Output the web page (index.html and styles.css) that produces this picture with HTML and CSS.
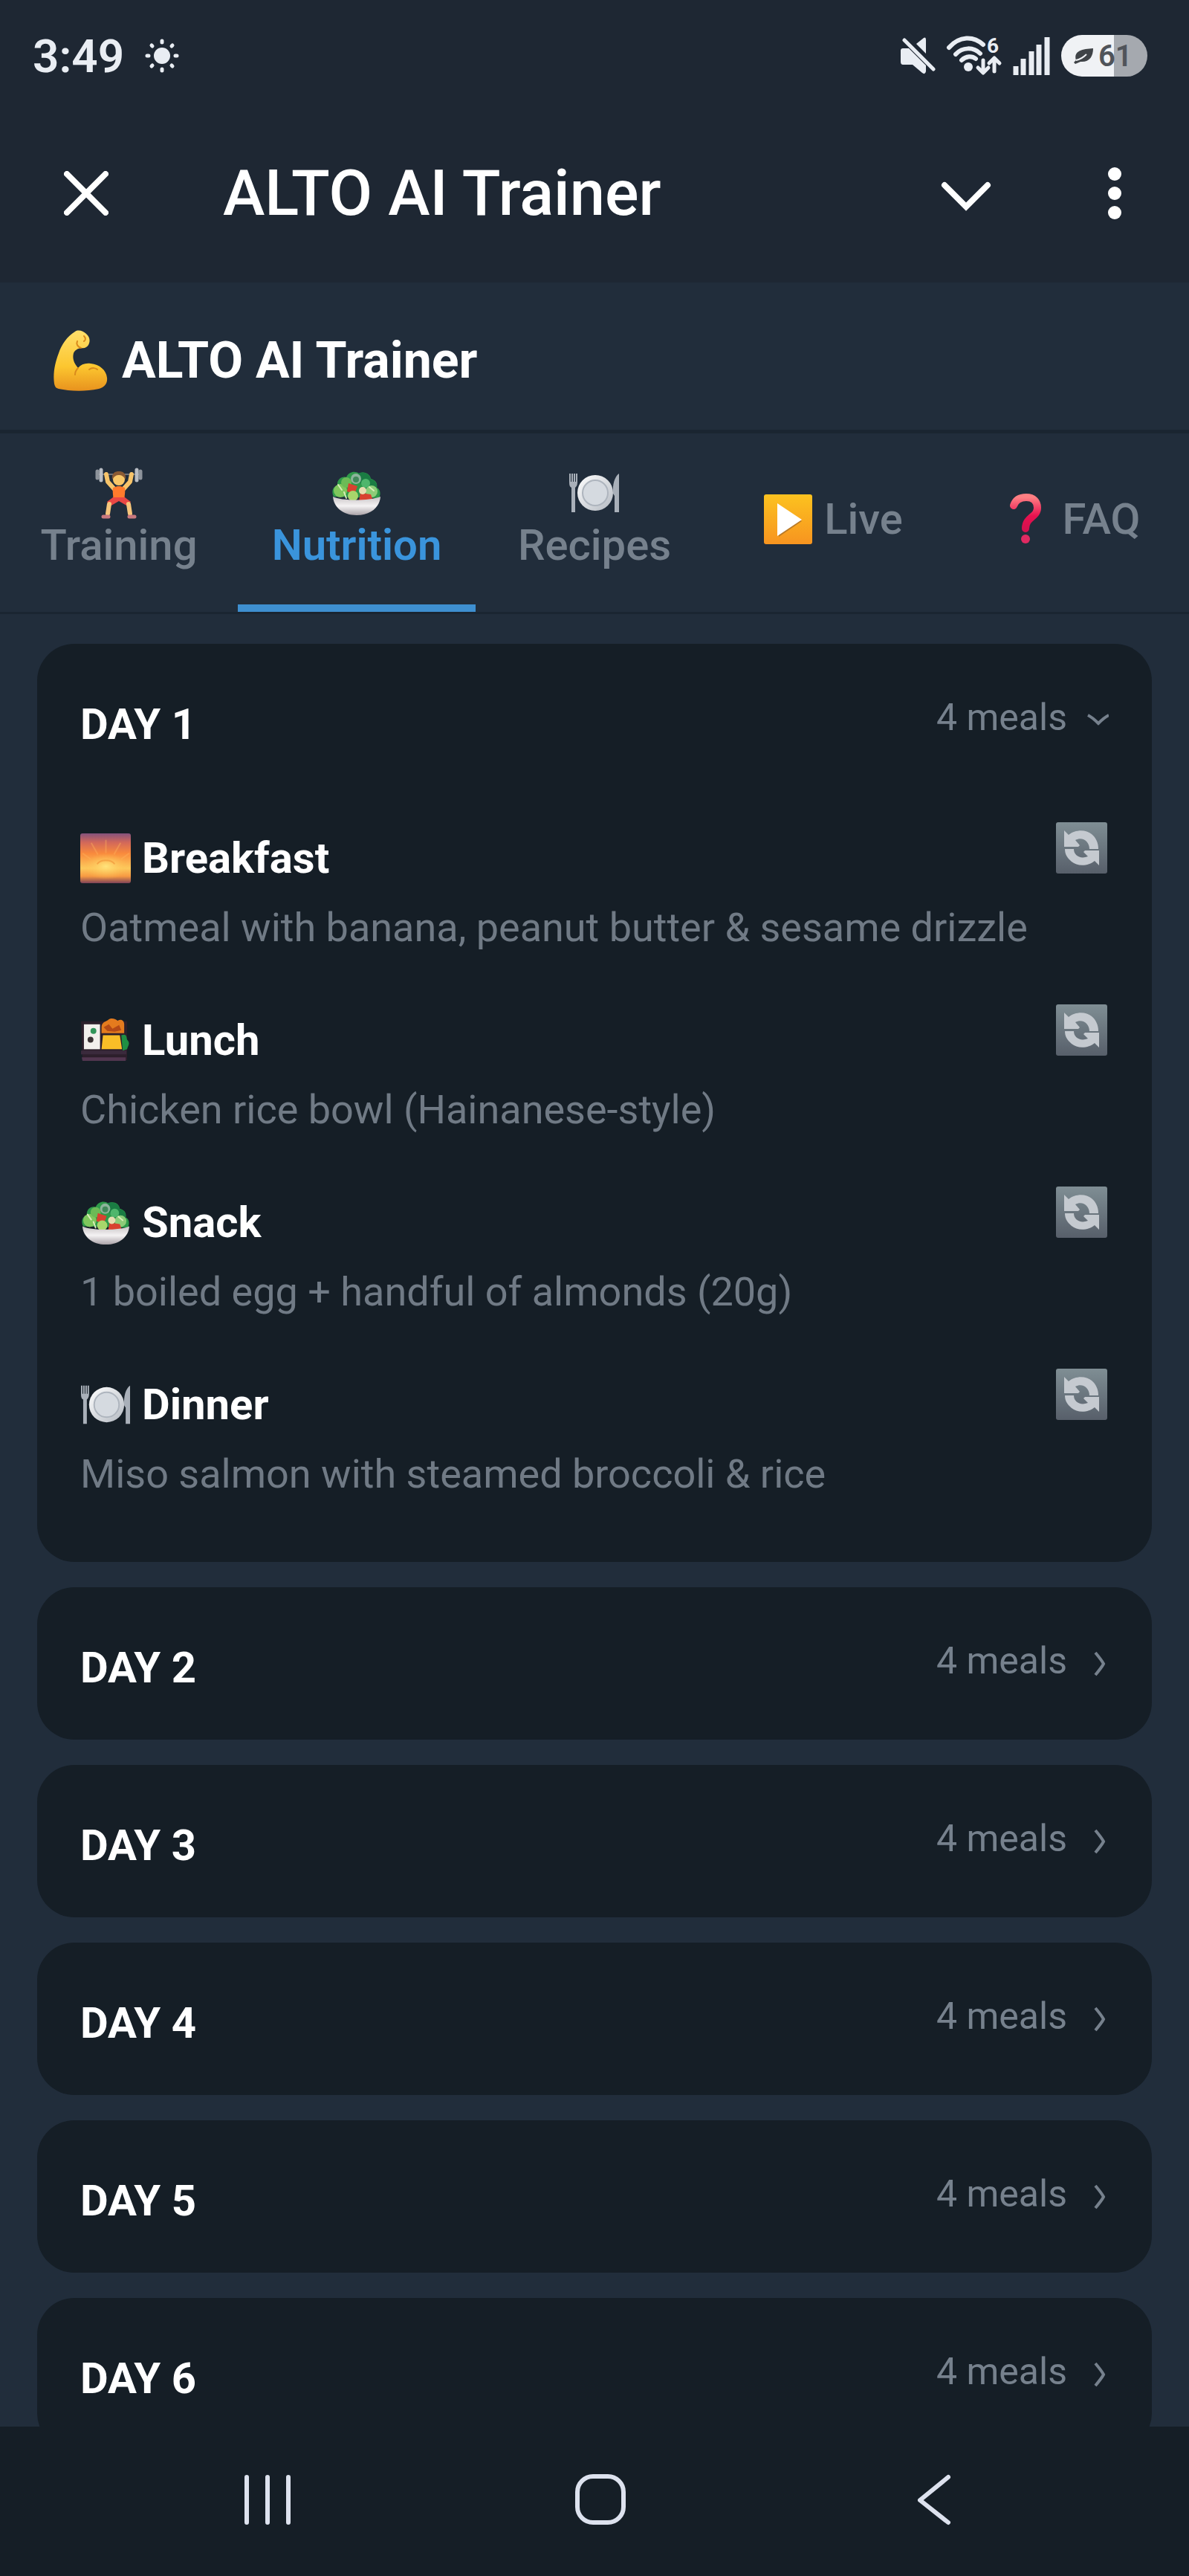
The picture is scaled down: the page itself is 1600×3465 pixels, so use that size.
FILE: index.html
```html
<!DOCTYPE html>
<html lang="en">

<head>
    <meta charset="UTF-8">
    <meta name="viewport" content="width=device-width, initial-scale=1.0">
    <title>ALTO AI Trainer</title>
    <link rel="stylesheet" href="styles.css">
</head>

<body>
    <!-- Shared icons -->
    <svg class="sprite" aria-hidden="true">
        <defs>
            <linearGradient id="g-arm" x1="0" y1="0" x2="0" y2="1">
                <stop offset="0" stop-color="#ffdf6b" />
                <stop offset="0.6" stop-color="#fcc62f" />
                <stop offset="1" stop-color="#e8921e" />
            </linearGradient>
            <linearGradient id="g-play" x1="0" y1="0" x2="0" y2="1">
                <stop offset="0" stop-color="#fcc21f" />
                <stop offset="1" stop-color="#f79420" />
            </linearGradient>
            <linearGradient id="g-faq" x1="0" y1="0" x2="0" y2="1">
                <stop offset="0" stop-color="#ff7f83" />
                <stop offset="0.6" stop-color="#e8114f" />
                <stop offset="1" stop-color="#d5104f" />
            </linearGradient>
            <linearGradient id="g-sky" x1="0" y1="0" x2="0" y2="1">
                <stop offset="0" stop-color="#84527c" />
                <stop offset="0.18" stop-color="#d2685a" />
                <stop offset="0.4" stop-color="#f98a3c" />
                <stop offset="0.7" stop-color="#fdc95c" />
                <stop offset="0.86" stop-color="#f79a42" />
                <stop offset="1" stop-color="#7e4258" />
            </linearGradient>
            <radialGradient id="g-sun" cx="0.5" cy="0.5" r="0.5">
                <stop offset="0" stop-color="#ffe47c" />
                <stop offset="1" stop-color="#ffc050" stop-opacity="0" />
            </radialGradient>
            <linearGradient id="g-bowl" x1="0" y1="0" x2="0" y2="1">
                <stop offset="0" stop-color="#c9c4c6" />
                <stop offset="0.5" stop-color="#f4f2f3" />
                <stop offset="1" stop-color="#aaa3a8" />
            </linearGradient>
            <linearGradient id="g-refresh" x1="0" y1="0" x2="0" y2="1">
                <stop offset="0" stop-color="#7f8e94" />
                <stop offset="1" stop-color="#575f6a" />
            </linearGradient>
            <linearGradient id="g-plate" x1="0" y1="0" x2="1" y2="1">
                <stop offset="0" stop-color="#ffffff" />
                <stop offset="1" stop-color="#b4bac2" />
            </linearGradient>
        </defs>

        <symbol id="arm" viewBox="0 0 82 82">
            <path fill="url(#g-arm)" d="M5 72C3 58 6 44 11 31C15 19 22 9 33 2C37-1 44 1 48 5C54 10 53 16 51 20C49 23 46 25 41 24C36 25 33 27 31 31C29 39 32 45 37 51C41 46 47 44 54 45C66 46 75 54 76 64C77 72 72 77 65 79C46 83 25 82 11 79C7 78 6 76 5 72Z" />
            <path fill="none" stroke="#d98a1c" stroke-width="2" stroke-linecap="round" d="M37 51C34 54 33 57 33 60M41 24C37 23 34 19 36 15M45 8C48 11 47 14 45 15M52 53C56 50 61 51 63 53" />
        </symbol>

        <symbol id="lifter" viewBox="0 0 70 70">
            <path stroke="#6f737b" stroke-width="2" d="M7 10H63" />
            <path stroke="#8d939b" stroke-width="5" stroke-linecap="round" d="M6 6V15M64 6V15" />
            <path stroke="#b9bdc4" stroke-width="5" stroke-linecap="round" d="M11 4V18M59 4V18" />
            <path fill="none" stroke="#f7c46a" stroke-width="6" stroke-linecap="round" stroke-linejoin="round" d="M18 10L20 20L29 30M52 10L50 20L41 30" />
            <circle cx="35" cy="17" r="8" fill="#f8c768" />
            <path fill="#8a5a33" d="M26 17C25 8 30 6 35 6S45 8 44 17C41 12 38 11 35 11S29 12 26 17Z" />
            <path fill="#ff7b2c" d="M27 28L33 26H37L43 28C44 35 42 39 43 43H27C28 39 26 35 27 28Z" />
            <path fill="#e94744" d="M27 41H43L51 47L47 53L35 46L23 53L19 47Z" />
            <path fill="none" stroke="#f7c67b" stroke-width="6" stroke-linecap="round" d="M22 50L20 63M48 50L50 63" />
            <path stroke="#c9787e" stroke-width="5" stroke-linecap="round" d="M14 67H21M49 67H56" />
        </symbol>

        <symbol id="salad" viewBox="0 0 70 70">
            <path fill="#2e9a49" d="M4 40C0 32 4 26 9 25C8 17 15 12 21 14C24 6 34 5 38 9C45 5 53 9 54 16C62 18 63 24 62 28C68 31 67 38 65 42Z" />
            <path fill="#1a7c43" d="M36 9C44 5 53 9 54 17C61 18 63 24 62 29L50 31L40 22Z" />
            <circle cx="13" cy="32" r="9" fill="#7fc75c" />
            <circle cx="21" cy="21" r="7" fill="#6bbb56" />
            <circle cx="34" cy="16" r="7" fill="#8cb49b" />
            <circle cx="34" cy="17" r="4" fill="#42895a" />
            <circle cx="55" cy="33" r="8" fill="#8dcc78" />
            <circle cx="47" cy="22" r="6" fill="#4fb66c" />
            <path fill="#d8412f" d="M24 22L36 26L32 37L22 33ZM40 35L54 37L57 46H38Z" />
            <circle cx="30" cy="39" r="7" fill="#a8d66b" />
            <circle cx="43" cy="32" r="5" fill="#e8ddb0" />
            <path stroke="#d8efb8" stroke-width="2" stroke-linecap="round" d="M10 24L15 31M18 34L21 42M52 27L58 32" />
            <path fill="url(#g-bowl)" d="M3 40C14 46 54 46 67 40C66 54 54 65 35 65S4 54 3 40Z" />
        </symbol>

        <symbol id="plate" viewBox="0 0 70 70">
            <path fill="#a9b0b9" d="M1 9H3V20H4V9H6V20H7V9H9V20H10V9H12V21C12 25 10 27 9 28V61H4V28C2 27 1 25 1 21Z" />
            <path fill="#a9b0b9" d="M68 9V61H62V39L60 36C59 24 62 13 68 9Z" />
            <circle cx="36" cy="35" r="24" fill="url(#g-plate)" />
            <circle cx="36" cy="35" r="17" fill="#d5dae0" stroke="#aeb5be" stroke-width="2" />
        </symbol>

        <symbol id="play" viewBox="0 0 70 70">
            <rect x="3" y="2" width="65" height="67" rx="3" fill="url(#g-play)" />
            <path fill="#b97a28" d="M23 17L54 38L23 59Z" />
            <path fill="#ffffff" d="M21 14L54 36L21 58Z" />
        </symbol>

        <symbol id="question" viewBox="0 0 70 70">
            <path fill="none" stroke="url(#g-faq)" stroke-width="10" stroke-linecap="round" d="M18 17C21 8 28 6 35 6C45 6 50 12 50 20C50 33 34 32 34 48" />
            <circle cx="34" cy="62" r="6" fill="#e02a62" />
        </symbol>

        <symbol id="sunrise" viewBox="0 0 70 70">
            <rect y="1" width="69" height="68" rx="3" fill="url(#g-sky)" />
            <ellipse cx="35" cy="46" rx="30" ry="18" fill="url(#g-sun)" />
            <path stroke="#ffb35c" stroke-width="2" opacity="0.4" d="M35 28V10M24 30L15 14M46 30L55 14M14 36L3 28M56 36L67 28" />
            <path fill="none" stroke="#f5a545" stroke-width="2" d="M23 43C27 36 43 36 47 43" />
        </symbol>

        <symbol id="bento" viewBox="0 0 70 70">
            <path fill="#2c1f2b" d="M1 9H64V62H3Z" />
            <rect x="5" y="13" width="22" height="34" fill="#f2efec" />
            <circle cx="18" cy="22" r="4" fill="#31955a" />
            <circle cx="14" cy="34" r="4" fill="#3b3335" />
            <path fill="#e47b1e" d="M29 17C29 10 35 9 38 7C42 3 49 6 51 8C56 5 60 8 60 13V25H29Z" />
            <path fill="#b54a16" d="M32 17L39 13L44 19L53 14L56 21L47 23L37 22Z" />
            <path fill="#f9be27" d="M31 28H54L57 47H29Z" />
            <path fill="#1f8f43" d="M56 28C64 25 63 31 64 34C69 39 65 42 64 47L58 49Z" />
            <path fill="#3a2a3c" d="M1 49H63V54H1Z" />
            <path fill="#51364f" d="M2 58H62V63H3Z" />
        </symbol>

        <symbol id="refresh" viewBox="0 0 69 69">
            <rect width="69" height="69" rx="3" fill="url(#g-refresh)" />
            <path fill="#c5cad0" d="M11 11L17 17C25 10 40 9 48 16C54 21 57 28 57 36H45C45 26 36 19 26 24L32 31L30 33H11Z" />
            <path fill="#c5cad0" d="M58 58L52 52C44 59 29 60 21 53C15 48 12 43 12 36H24C24 45 33 50 43 46L37 40L39 38H58Z" />
        </symbol>

        <symbol id="chevron-right" viewBox="0 0 30 46">
            <path fill="none" stroke="currentColor" stroke-width="4" d="M12 12C17 18 21 23 23 27C21 31 17 36 12 42" />
        </symbol>

        <symbol id="chevron-down" viewBox="0 0 30 46">
            <path fill="none" stroke="currentColor" stroke-width="4" d="M2 20C8 23 12 27 16 31C20 27 24 23 30 20" />
        </symbol>
    </svg>

    <div class="status-bar">
        <span class="time">3:49</span>
        <svg class="weather" viewBox="0 0 46 46" aria-hidden="true">
            <circle cx="23" cy="23" r="11" fill="currentColor" />
            <path stroke="currentColor" stroke-width="5" stroke-linecap="round" d="M23 3V5M23 41V43M3 23H5M41 23H43M9 9L10 10M36 36L37 37M9 37L10 36M36 10L37 9" />
        </svg>
        <div class="status-icons">
            <svg width="48" height="54" viewBox="0 0 48 54" aria-hidden="true">
                <path fill="currentColor" d="M1 20Q1 17 4 17H12L35 40V48Q34 53 30 50L17 39H4Q1 39 1 35ZM22 11L32 3Q35 1 35 6V24Z" />
                <path stroke="currentColor" stroke-width="5" stroke-linecap="round" d="M6 6L45 45" />
            </svg>
            <svg width="76" height="74" viewBox="0 -10 76 74" aria-hidden="true">
                <path fill="none" stroke="currentColor" stroke-width="6" stroke-linecap="round" d="M4 16C18 0 37 0 50 12M13 25C22 15 37 15 46 24M21 33C27 27 35 27 40 31" />
                <circle cx="30" cy="42" r="6" fill="currentColor" />
                <path fill="none" stroke="currentColor" stroke-width="5" stroke-linecap="round" stroke-linejoin="round" d="M50 33V49M43 43L50 50L57 43M65 48V32M58 37L65 30L72 37" />
                <text class="wifi-band" x="55" y="23">6</text>
            </svg>
            <svg width="51" height="54" viewBox="0 0 51 54" aria-hidden="true">
                <path stroke="currentColor" stroke-width="7" d="M4 41V53M14 31V53M25 21V53M35 12V53M46 2V53" />
            </svg>
            <div class="battery">
                <svg width="28" height="22" viewBox="0 0 28 22" aria-hidden="true">
                    <path fill="#3f4347" d="M4 17C0 4 13 2 27 1C27 12 22 20 10 19L3 22L1 20Z" />
                    <path fill="none" stroke="#f0f2f5" stroke-width="2" d="M4 17C10 16 14 13 18 9" />
                </svg>
                <span>61</span>
            </div>
        </div>
    </div>

    <header class="app-bar">
        <button type="button" class="icon-btn" aria-label="Close">
            <svg width="60" height="60" viewBox="0 0 60 60">
                <path stroke="currentColor" stroke-width="8" stroke-linecap="round" d="M4 4L56 56M56 4L4 56" />
            </svg>
        </button>
        <h1>ALTO AI Trainer</h1>
        <button type="button" class="icon-btn" aria-label="Minimize">
            <svg width="68" height="60" viewBox="0 0 68 60">
                <path fill="none" stroke="currentColor" stroke-width="8" stroke-linecap="round" d="M5 19L34 48L63 19" />
            </svg>
        </button>
        <button type="button" class="icon-btn" aria-label="More options">
            <svg width="20" height="72" viewBox="0 0 20 72">
                <g fill="currentColor">
                    <circle cx="10" cy="10" r="9" />
                    <circle cx="10" cy="36" r="9" />
                    <circle cx="10" cy="62" r="9" />
                </g>
            </svg>
        </button>
    </header>

    <div class="page-title">
        <svg aria-hidden="true"><use href="#arm" /></svg>
        <h2>ALTO AI Trainer</h2>
    </div>

    <nav class="tabs">
        <a href="#training" class="tab stacked"><svg aria-hidden="true"><use href="#lifter" /></svg>Training</a>
        <a href="#nutrition" class="tab stacked active"><svg aria-hidden="true"><use href="#salad" /></svg>Nutrition</a>
        <a href="#recipes" class="tab stacked"><svg aria-hidden="true"><use href="#plate" /></svg>Recipes</a>
        <a href="#live" class="tab"><svg aria-hidden="true"><use href="#play" /></svg>Live</a>
        <a href="#faq" class="tab"><svg aria-hidden="true"><use href="#question" /></svg>FAQ</a>
    </nav>

    <main class="days" id="nutrition">
        <section class="day-card">
            <button type="button" class="day-header" aria-expanded="true">
                <span class="day-name">DAY 1</span>
                <span class="day-meta">4 meals <svg aria-hidden="true"><use href="#chevron-down" /></svg></span>
            </button>
            <ul class="meals">
                <li class="meal">
                    <div class="meal-info">
                        <h3><svg aria-hidden="true"><use href="#sunrise" /></svg>Breakfast</h3>
                        <p>Oatmeal with banana, peanut butter &amp; sesame drizzle</p>
                    </div>
                    <button type="button" class="swap-btn" aria-label="Swap breakfast"><svg><use href="#refresh" /></svg></button>
                </li>
                <li class="meal">
                    <div class="meal-info">
                        <h3><svg aria-hidden="true"><use href="#bento" /></svg>Lunch</h3>
                        <p>Chicken rice bowl (Hainanese-style)</p>
                    </div>
                    <button type="button" class="swap-btn" aria-label="Swap lunch"><svg><use href="#refresh" /></svg></button>
                </li>
                <li class="meal">
                    <div class="meal-info">
                        <h3><svg aria-hidden="true"><use href="#salad" /></svg>Snack</h3>
                        <p>1 boiled egg + handful of almonds (20g)</p>
                    </div>
                    <button type="button" class="swap-btn" aria-label="Swap snack"><svg><use href="#refresh" /></svg></button>
                </li>
                <li class="meal">
                    <div class="meal-info">
                        <h3><svg aria-hidden="true"><use href="#plate" /></svg>Dinner</h3>
                        <p>Miso salmon with steamed broccoli &amp; rice</p>
                    </div>
                    <button type="button" class="swap-btn" aria-label="Swap dinner"><svg><use href="#refresh" /></svg></button>
                </li>
            </ul>
        </section>

        <section class="day-card">
            <button type="button" class="day-header" aria-expanded="false">
                <span class="day-name">DAY 2</span>
                <span class="day-meta">4 meals <svg aria-hidden="true"><use href="#chevron-right" /></svg></span>
            </button>
        </section>

        <section class="day-card">
            <button type="button" class="day-header" aria-expanded="false">
                <span class="day-name">DAY 3</span>
                <span class="day-meta">4 meals <svg aria-hidden="true"><use href="#chevron-right" /></svg></span>
            </button>
        </section>

        <section class="day-card">
            <button type="button" class="day-header" aria-expanded="false">
                <span class="day-name">DAY 4</span>
                <span class="day-meta">4 meals <svg aria-hidden="true"><use href="#chevron-right" /></svg></span>
            </button>
        </section>

        <section class="day-card">
            <button type="button" class="day-header" aria-expanded="false">
                <span class="day-name">DAY 5</span>
                <span class="day-meta">4 meals <svg aria-hidden="true"><use href="#chevron-right" /></svg></span>
            </button>
        </section>

        <section class="day-card">
            <button type="button" class="day-header" aria-expanded="false">
                <span class="day-name">DAY 6</span>
                <span class="day-meta">4 meals <svg aria-hidden="true"><use href="#chevron-right" /></svg></span>
            </button>
        </section>
    </main>

    <footer class="system-nav">
        <button type="button" aria-label="Recent apps">
            <svg width="70" height="70" viewBox="0 0 70 70">
                <path stroke="currentColor" stroke-width="6" stroke-linecap="round" d="M7 4V65M35 4V65M63 4V65" />
            </svg>
        </button>
        <button type="button" aria-label="Home">
            <svg width="70" height="70" viewBox="0 0 70 70">
                <rect x="4" y="3" width="62" height="62" rx="21" fill="none" stroke="currentColor" stroke-width="6" />
            </svg>
        </button>
        <button type="button" aria-label="Back">
            <svg width="70" height="70" viewBox="0 0 70 70">
                <path fill="none" stroke="currentColor" stroke-width="6" stroke-linecap="round" stroke-linejoin="round" d="M55 4L17 35L55 65" />
            </svg>
        </button>
    </footer>
</body>

</html>
```
FILE: styles.css
```css
/* General Reset */
* {
    margin: 0;
    padding: 0;
    box-sizing: border-box;
}

body {
    height: 100vh;
    display: flex;
    flex-direction: column;
    font-family: Roboto, 'Liberation Sans', sans-serif;
    background-color: #212d3b;
    color: #fff;
}

button {
    background: none;
    border: none;
    color: inherit;
    font: inherit;
    cursor: pointer;
}

svg {
    display: block;
    flex-shrink: 0;
}

.sprite {
    position: absolute;
    width: 0;
    height: 0;
}

/* Phone status bar */
.status-bar {
    display: flex;
    align-items: center;
    flex-shrink: 0;
    height: 140px;
    padding: 10px 56px 0 44px;
    background-color: #1e2733;
    color: #e9edf3;
}

.time {
    font-size: 62px;
    font-weight: 600;
}

.weather {
    width: 46px;
    height: 46px;
    margin-left: 28px;
}

.status-icons {
    display: flex;
    align-items: center;
    gap: 14px;
    margin-left: auto;
}

.wifi-band {
    font-size: 28px;
    font-weight: 700;
    fill: currentColor;
}

.battery {
    display: flex;
    align-items: center;
    gap: 6px;
    height: 56px;
    width: 116px;
    padding-left: 16px;
    border-radius: 28px;
    /* Filled part shows the charge level */
    background: linear-gradient(to right, #f0f2f5 61%, #a5a9af 61%);
    color: #50545a;
    font-size: 40px;
    font-weight: 600;
}

/* App bar */
.app-bar {
    display: flex;
    align-items: center;
    flex-shrink: 0;
    height: 240px;
    padding: 0 90px 0 86px;
    background-color: #1e2733;
}

.app-bar h1 {
    flex: 1;
    margin-left: 154px;
    font-size: 85px;
    font-weight: 500;
}

.icon-btn + .icon-btn {
    margin-left: 156px;
}

.page-title {
    display: flex;
    align-items: center;
    flex-shrink: 0;
    gap: 14px;
    padding: 64px 68px 52px;
    border-bottom: 5px solid #1a2531;
}

.page-title svg {
    width: 82px;
    height: 82px;
}

.page-title h2 {
    font-size: 68px;
    font-weight: 700;
    line-height: 82px;
}

/* Tabs */
.tabs {
    display: grid;
    grid-template-columns: repeat(5, 1fr);
    flex-shrink: 0;
    border-bottom: 3px solid #1a2531;
}

.tab {
    display: flex;
    align-items: center;
    justify-content: center;
    gap: 14px;
    height: 240px;
    border-bottom: 10px solid transparent;
    color: #76818d;
    font-size: 58px;
    font-weight: 500;
    line-height: 70px;
    text-decoration: none;
}

.tab.stacked {
    flex-direction: column;
    gap: 0;
}

.tab.active {
    color: #3a94dc;
    border-bottom-color: #3e8fd0;
    font-weight: 600;
}

.tab svg {
    width: 70px;
    height: 70px;
}

/* Day cards */
.days {
    display: flex;
    flex-direction: column;
    flex: 1;
    gap: 34px;
    min-height: 0;
    padding: 40px 50px 0;
    overflow-y: auto;
    scrollbar-width: none;
}

.day-card {
    flex-shrink: 0;
    background-color: #151e26;
    border-radius: 50px;
}

.day-header {
    display: flex;
    align-items: flex-start;
    justify-content: space-between;
    width: 100%;
    padding: 76px 58px 65px;
}

.day-name {
    font-size: 58px;
    font-weight: 700;
    line-height: 64px;
}

.day-meta {
    display: flex;
    align-items: center;
    gap: 26px;
    color: #76818d;
    font-size: 50px;
    line-height: 46px;
}

.day-meta svg {
    width: 30px;
    height: 46px;
}

.meals {
    padding: 0 60px 50px 58px;
    list-style: none;
}

.meal {
    display: flex;
    align-items: flex-start;
    justify-content: space-between;
    padding: 35px 0;
}

.meal-info {
    padding-top: 14px;
}

.meal h3 {
    display: flex;
    align-items: center;
    gap: 14px;
    font-size: 58px;
    font-weight: 700;
    line-height: 69px;
}

.meal h3 svg,
.swap-btn svg {
    width: 69px;
    height: 69px;
}

.meal p {
    margin-top: 26px;
    color: #707a85;
    font-size: 54px;
    line-height: 66px;
}

/* Android navigation buttons */
.system-nav {
    display: grid;
    grid-template-columns: repeat(3, 1fr);
    flex-shrink: 0;
    height: 201px;
    padding: 0 120px 4px 136px;
    background-color: #151e26;
    color: #dde2ee;
}

.system-nav button {
    display: flex;
    align-items: center;
    justify-content: center;
}
```
